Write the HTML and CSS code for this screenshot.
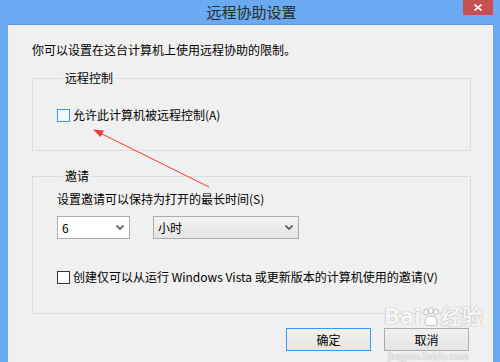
FILE: index.html
```html
<!DOCTYPE html>
<html lang="zh-CN">
<head>
<meta charset="utf-8">
<title>远程协助设置</title>
<link rel="stylesheet" href="styles.css">
</head>
<body>
<div class="window">
  <div class="titlebar">
    <div class="title">远程协助设置</div>
    <div class="close">
      <svg width="8" height="7" viewBox="0 0 8 7"><path d="M0.5 0.5 L7.5 6.5 M7.5 0.5 L0.5 6.5" stroke="#fff" stroke-width="1.6" fill="none"/></svg>
    </div>
  </div>
  <div class="client">
    <p class="intro">你可以设置在这台计算机上使用远程协助的限制。</p>
    <fieldset class="group group-control">
      <legend>远程控制</legend>
      <label class="check"><span class="box box-hot"></span>允许此计算机被远程控制(A)</label>
    </fieldset>
    <fieldset class="group group-invite">
      <legend>邀请</legend>
      <p class="line">设置邀请可以保持为打开的最长时间(S)</p>
      <div class="selects">
        <div class="combo combo-edit"><span>6</span><svg class="chev" width="8" height="5" viewBox="0 0 8 5"><path d="M0.5 0.5 L4 4 L7.5 0.5" stroke="#555" stroke-width="1.6" fill="none"/></svg></div>
        <div class="combo combo-list"><span>小时</span><svg class="chev" width="8" height="5" viewBox="0 0 8 5"><path d="M0.5 0.5 L4 4 L7.5 0.5" stroke="#555" stroke-width="1.6" fill="none"/></svg></div>
      </div>
      <label class="check check-vista"><span class="box"></span>创建仅可以从运行 Windows Vista 或更新版本的计算机使用的邀请(V)</label>
    </fieldset>
    <div class="buttons">
      <button class="btn btn-default">确定</button>
      <button class="btn">取消</button>
    </div>
  </div>
  <svg class="arrow" width="500" height="362" viewBox="0 0 500 362">
    <line x1="209" y1="187" x2="100" y2="133" stroke="#f23a3a" stroke-width="1"/>
    <path d="M93 129.5 L104 130.5 L100.5 137 Z" fill="#f23a3a"/>
  </svg>
  <div class="watermark">
    <div class="wm-main">Bai<svg class="paw" width="18" height="20" viewBox="0 0 18 20"><g fill="#fff" stroke="#bdbdbd" stroke-width="1"><ellipse cx="4" cy="5" rx="2.2" ry="3"/><ellipse cx="9" cy="3.5" rx="2.2" ry="3"/><ellipse cx="14" cy="5" rx="2.2" ry="3"/><path d="M3 16 C3 11 6 9 9 9 C12 9 15 11 15 16 C15 19 12 18.5 9 18.5 C6 18.5 3 19 3 16 Z"/></g></svg>经验</div>
    <div class="wm-sub">jingyan.baidu.com</div>
  </div>
</div>
</body>
</html>
```

FILE: styles.css
```css
* { box-sizing: border-box; }
html, body {
  margin: 0;
  padding: 0;
}
body {
  width: 500px;
  height: 362px;
  overflow: hidden;
  background: #6aaaf2;
  font-family: "Noto Sans CJK SC", "Noto Sans", sans-serif;
  font-size: 12px;
  color: #000;
}
.window {
  position: relative;
  width: 500px;
  height: 362px;
  background: #6aaaf2;
  padding: 0 7px 0 8px;
  display: flex;
  flex-direction: column;
}
.titlebar {
  height: 24px;
  flex: none;
  display: flex;
  justify-content: center;
  align-items: center;
  position: relative;
}
.title {
  font-size: 15px;
  line-height: 20px;
  color: #2b2b2b;
  margin-left: 2px;
  margin-top: -1px;
}
.close {
  position: absolute;
  right: 0;
  top: 0;
  width: 30px;
  height: 15px;
  background: #c75050;
  display: flex;
  align-items: center;
  justify-content: center;
}
.client {
  flex: 1;
  background: #f0f0f0;
  padding: 17px 22px 0 24px;
  border-top: 1px solid #5c9ae0;
}
.intro {
  margin: 0;
  line-height: 16px;
  padding-top: 0;
}
.group {
  margin: 12px 0 0 0;
  padding: 0 24px;
  border: 1px solid #dcdcdc;
  min-width: 0;
}
.group legend {
  margin-left: 6px;
  padding: 0 2px;
  line-height: 16px;
}
.group-control {
  padding-top: 21px;
  padding-bottom: 27px;
}
.group-invite {
  margin-top: 17px;
  padding-top: 7px;
  padding-bottom: 28px;
}
.check {
  display: flex;
  align-items: center;
  line-height: 16px;
  gap: 3px;
}
.box {
  width: 13px;
  height: 13px;
  border: 1px solid #333;
  background: #fff;
  flex: none;
}
.box-hot {
  border-color: #3399ff;
  background: #f4f9ff;
}
.line {
  margin: 0;
  line-height: 16px;
}
.selects {
  display: flex;
  gap: 23px;
  margin-top: 9px;
}
.combo {
  height: 23px;
  display: flex;
  align-items: center;
  justify-content: space-between;
  padding: 0 5px 0 4px;
}
.combo-edit {
  width: 73px;
  background: #fff;
  border: 1px solid #abadb3;
}
.combo-list {
  width: 146px;
  background: linear-gradient(#f2f2f2, #e5e5e5);
  border: 1px solid #acacac;
}
.chev { flex: none; }
.check-vista {
  margin-top: 30px;
}
.buttons {
  display: flex;
  justify-content: flex-end;
  gap: 13px;
  margin-top: 14px;
  padding-right: 2px;
}
.btn {
  width: 85px;
  height: 23px;
  font: inherit;
  font-size: 12px;
  color: #000;
  background: linear-gradient(#f0f0f0, #e5e5e5);
  border: 1px solid #acacac;
  padding: 0;
}
.btn-default {
  border-color: #3399ff;
}
.arrow {
  position: absolute;
  left: 0;
  top: 0;
  pointer-events: none;
}
.watermark {
  position: absolute;
  left: 384px;
  top: 303px;
  color: rgba(255, 255, 255, 0.9);
  text-shadow: 0 0 1px #b0b0b0, 0 0 1px #b0b0b0;
  pointer-events: none;
}
.wm-main {
  display: flex;
  align-items: center;
  font-family: "DejaVu Sans", sans-serif;
  font-size: 21px;
  line-height: 26px;
  font-weight: bold;
  height: 28px;
}
.paw {
  margin: 0 1px;
  flex: none;
}
.wm-sub {
  margin-top: 20px;
  font-family: "Liberation Sans", sans-serif;
  font-size: 10px;
  line-height: 11px;
  padding-left: 4px;
}
```
